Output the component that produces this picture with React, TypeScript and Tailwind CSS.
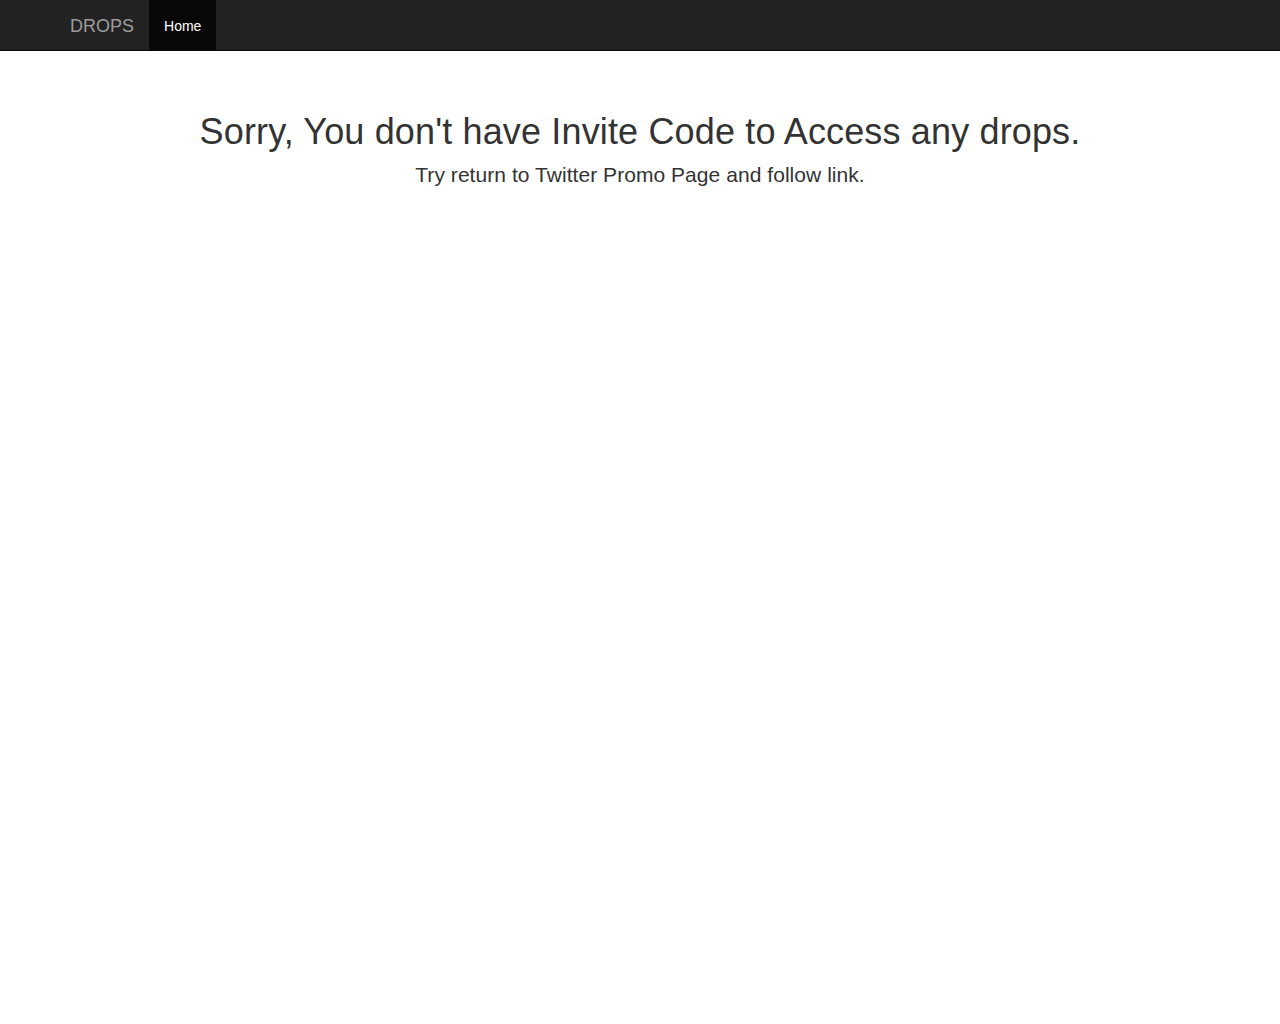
export default function App() {
  return (
    <div className="min-h-screen bg-white text-[#333]" style={{ fontFamily: '"Liberation Sans", Arial, sans-serif' }}>
      <nav className="h-[51px] bg-[#222] border-b border-[#080808]">
        <div className="mx-auto w-[1170px] px-[15px] flex">
          <a className="-ml-[15px] h-[50px] px-[15px] pt-[16px] pb-[14px] text-[18px] leading-[20px] text-[#9d9d9d]">DROPS</a>
          <a className="h-[50px] px-[15px] pt-[16px] pb-[14px] text-[14px] leading-[20px] text-white bg-[#080808]">Home</a>
        </div>
      </nav>
      <div className="text-center pt-[61px]">
        <h1 className="text-[36px] leading-[39.6px] font-normal tracking-[0.15px]">Sorry, You don't have Invite Code to Access any drops.</h1>
        <p className="mt-[8px] text-[21px] leading-[29.4px] tracking-[0.05px]">Try return to Twitter Promo Page and follow link.</p>
      </div>
    </div>
  );
}
